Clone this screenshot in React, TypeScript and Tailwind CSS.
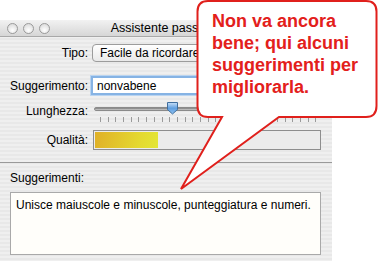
const TICKS = Array.from({ length: 29 }, (_, i) => i);

function TrafficLight() {
  return (
    <span className="block h-[11px] w-[11px] rounded-full border border-[#9a9a9a] bg-[radial-gradient(circle_at_50%_70%,#ffffff,#d4d4d4)]" />
  );
}

function Callout() {
  return (
    <div className="absolute left-[175px] top-0 h-[195px] w-[203px]">
      <svg width="203" height="195" viewBox="0 0 203 195" className="absolute left-0 top-0">
        <path
          d="M 33 1 L 191 1 Q 201.5 1 201.5 11.5 L 201.5 106 Q 201.5 117 191 117 L 104 117 L 6 189 L 47 117 L 33 117 Q 22.5 117 22.5 106 L 22.5 11.5 Q 22.5 1 33 1 Z"
          fill="#ffffff"
          stroke="#e0201c"
          strokeWidth="2"
          strokeLinejoin="miter"
        />
      </svg>
      <p className="absolute left-[37px] top-[10px] font-['Liberation_Sans',Arial,sans-serif] text-[18px] font-bold leading-[22px] text-[#e3201b]">
        Non va ancora
        <br />
        bene; qui alcuni
        <br />
        suggerimenti per
        <br />
        migliorarla.
      </p>
    </div>
  );
}

export default function App() {
  return (
    <div className="relative h-[261px] w-[378px] overflow-hidden bg-white font-['Liberation_Sans',Arial,sans-serif] text-[12px] text-black">
      <div className="mt-[20px] h-[241px] w-[332px] bg-[repeating-linear-gradient(180deg,#efefef_0px,#efefef_2px,#e8e8e8_2px,#e8e8e8_4px)]">
        {/* title bar */}
        <div className="relative flex h-[17px] items-center border-b border-[#a8a8a8] bg-[linear-gradient(180deg,#f2f2f2,#d6d6d6)] pl-[7px]">
          <div className="flex gap-[5px]">
            <TrafficLight />
            <TrafficLight />
            <TrafficLight />
          </div>
          <span className="absolute left-[4px] right-0 text-center text-[12.5px] leading-[17px]">Assistente password</span>
        </div>

        {/* form */}
        <div className="flex flex-col pt-[7px]">
          <div className="flex h-[18px] items-center">
            <span className="w-[88px] text-right">Tipo:</span>
            <div className="ml-[4px] flex h-[18px] w-[230px] items-center rounded-[4px] border border-[#9c9c9c] bg-[linear-gradient(180deg,#ffffff,#e9e9e9)] pl-[7px]">
              Facile da ricordare
            </div>
          </div>

          <div className="mt-[14px] flex h-[19px] items-center">
            <span className="w-[88px] text-right">Suggerimento:</span>
            <div className="ml-[3px] flex h-[19px] w-[230px] items-center border-2 border-[#86b3e4] bg-white pl-[4px] shadow-[0_0_0_1px_#b9d4f1]">
              nonvabene
            </div>
          </div>

          <div className="mt-[5px] flex h-[28px]">
            <span className="mt-[2px] w-[88px] text-right">Lunghezza:</span>
            <div className="relative ml-[6px] h-[28px] w-[228px]">
              <div className="absolute left-0 right-0 top-[7px] h-[4px] rounded-full border border-[#8a8a8a] bg-[linear-gradient(180deg,#7a7a7a,#cfcfcf)]" />
              <div className="absolute left-[72px] top-[1px] h-[14px] w-[13px]">
                <svg width="13" height="14" viewBox="0 0 13 14">
                  <defs>
                    <linearGradient id="knob" x1="0" y1="0" x2="0" y2="1">
                      <stop offset="0" stopColor="#c9e0f8" />
                      <stop offset="0.5" stopColor="#5f9fe0" />
                      <stop offset="1" stopColor="#8fc0f0" />
                    </linearGradient>
                  </defs>
                  <path d="M1.5 1.5 H11.5 V8.5 L6.5 13 L1.5 8.5 Z" fill="url(#knob)" stroke="#3f6e9e" strokeWidth="1" />
                </svg>
              </div>
              <div className="absolute left-[6px] top-[17px] flex gap-[6.7px]">
                {TICKS.map((t) => (
                  <span key={t} className="block h-[5px] w-px bg-[#9a9a9a]" />
                ))}
              </div>
            </div>
          </div>

          <div className="mt-[2px] flex h-[20px] items-center">
            <span className="w-[88px] text-right">Qualità:</span>
            <div className="ml-[5px] h-[20px] w-[228px] border border-[#8e8e8e] bg-[#ececec] p-px">
              <div className="h-full w-[63px] bg-[linear-gradient(100deg,#e0b028,#e4d930_70%,#e3e635)]" />
            </div>
          </div>
        </div>

        <div className="mt-[12px] h-px w-full bg-[#9a9a9a]" />

        <div className="px-[10px] pt-[6px]">
          <div>Suggerimenti:</div>
          <div className="mt-[5px] h-[63px] w-[311px] border border-[#a9a9a9] bg-[#fffefa] px-[5px] pt-[3px]">
            Unisce maiuscole e minuscole, punteggiatura e numeri.
          </div>
        </div>
      </div>
      <Callout />
    </div>
  );
}
